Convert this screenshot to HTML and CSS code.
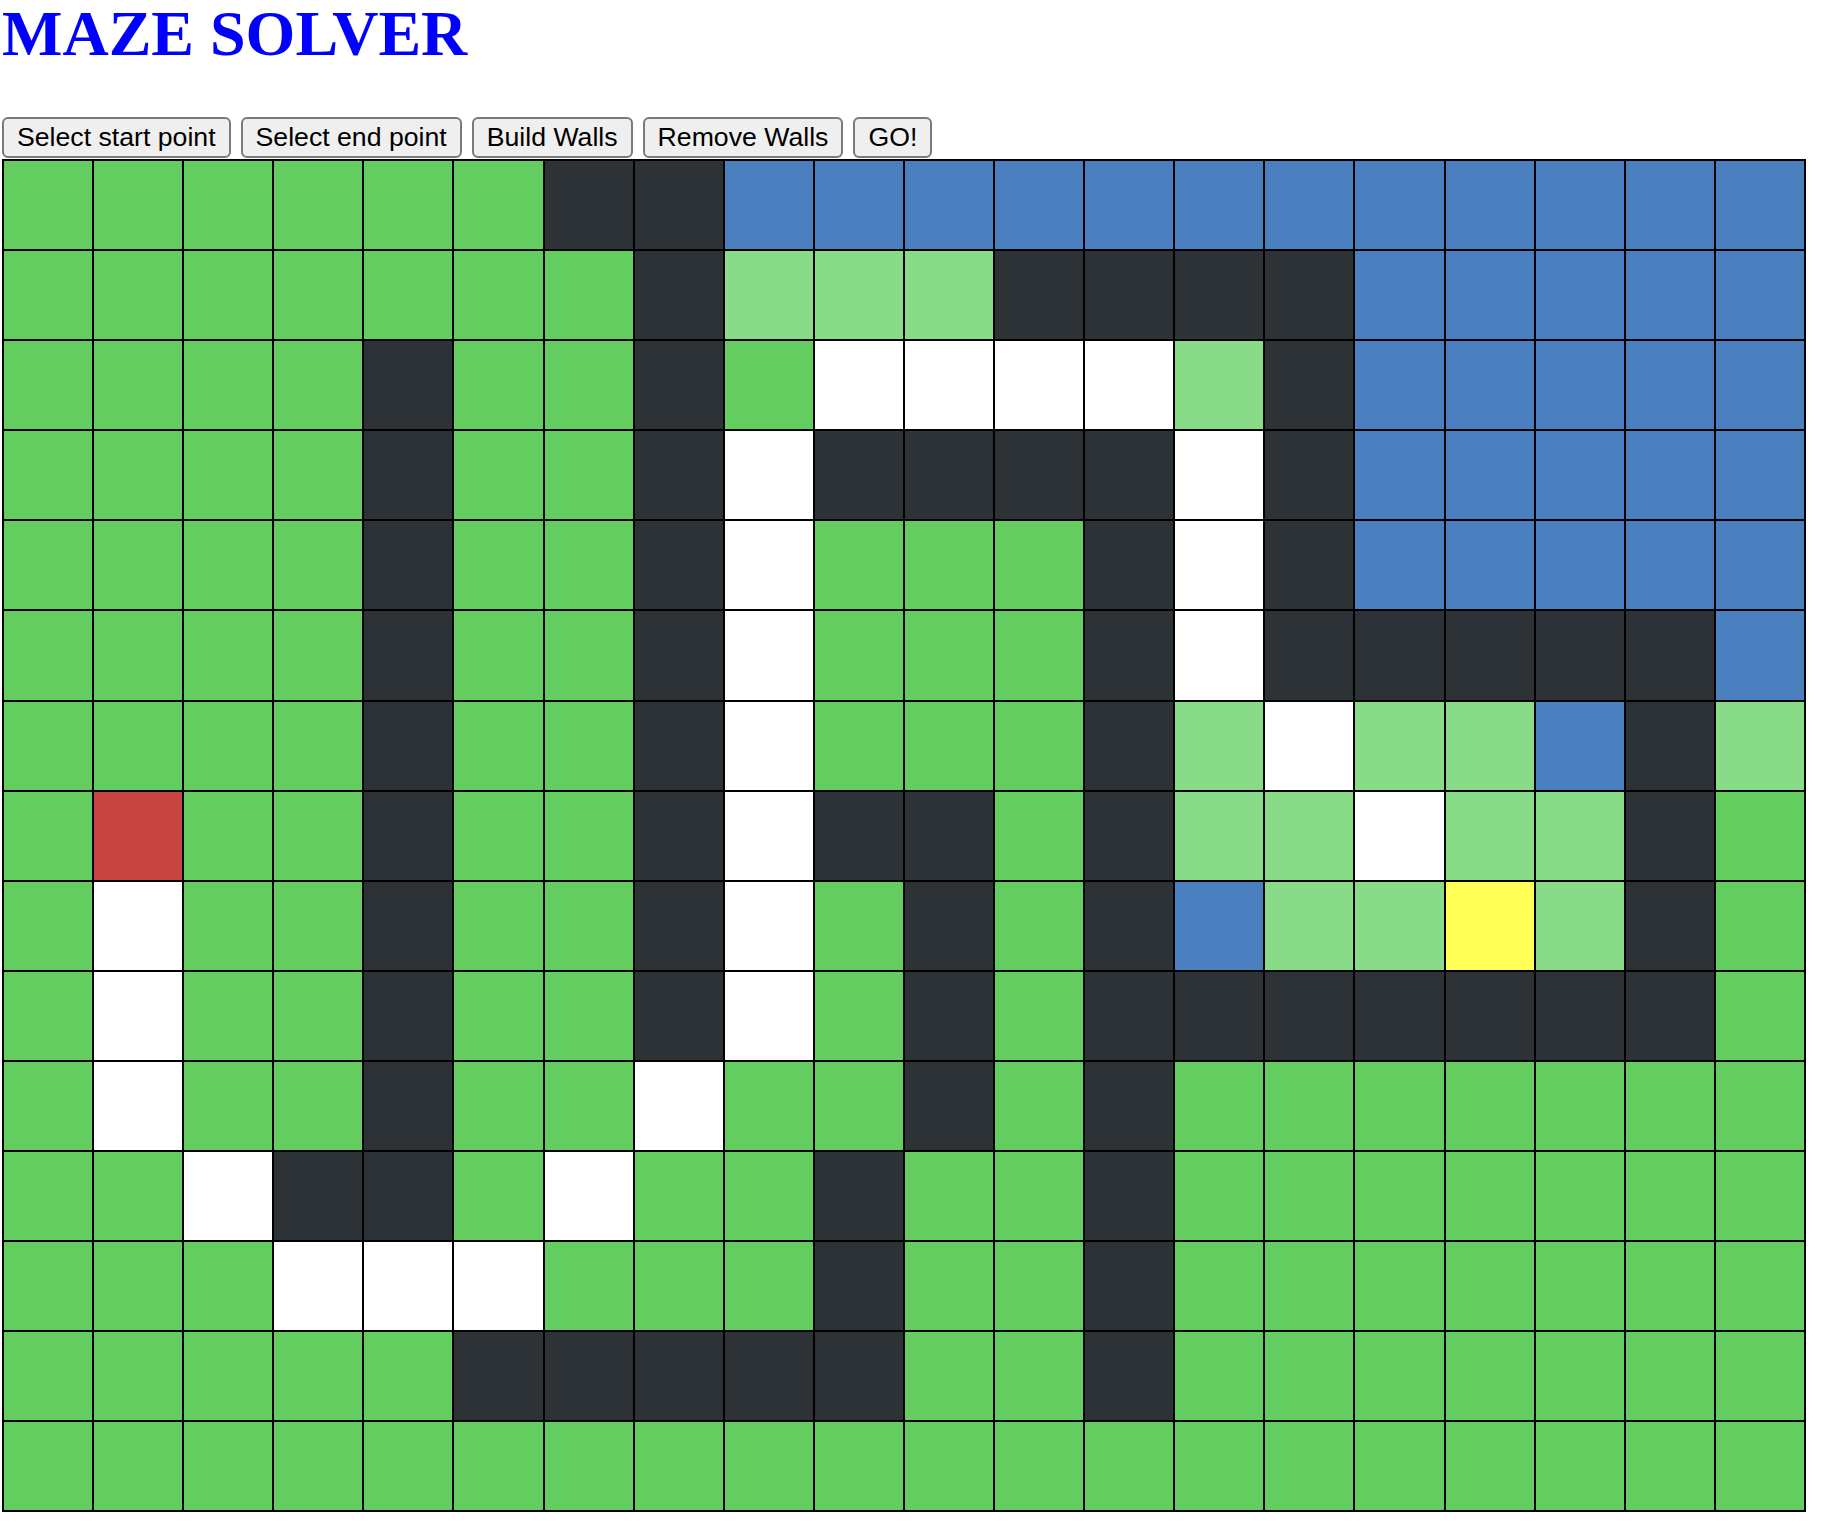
FILE: index.html
```html
<!DOCTYPE html>
<html>
<head>
<meta charset="utf-8">
<title>Maze Solver</title>
<link rel="stylesheet" href="styles.css">
</head>
<body>
<h1 class="title">MAZE SOLVER</h1>
<div class="controls">
  <button class="btn">Select start point</button>
  <button class="btn">Select end point</button>
  <button class="btn">Build Walls</button>
  <button class="btn">Remove Walls</button>
  <button class="btn">GO!</button>
</div>
<div class="maze">
  <div class="c g"></div><div class="c g"></div><div class="c g"></div><div class="c g"></div><div class="c g"></div><div class="c g"></div><div class="c d"></div><div class="c d"></div><div class="c b"></div><div class="c b"></div><div class="c b"></div><div class="c b"></div><div class="c b"></div><div class="c b"></div><div class="c b"></div><div class="c b"></div><div class="c b"></div><div class="c b"></div><div class="c b"></div><div class="c b"></div>
  <div class="c g"></div><div class="c g"></div><div class="c g"></div><div class="c g"></div><div class="c g"></div><div class="c g"></div><div class="c g"></div><div class="c d"></div><div class="c l"></div><div class="c l"></div><div class="c l"></div><div class="c d"></div><div class="c d"></div><div class="c d"></div><div class="c d"></div><div class="c b"></div><div class="c b"></div><div class="c b"></div><div class="c b"></div><div class="c b"></div>
  <div class="c g"></div><div class="c g"></div><div class="c g"></div><div class="c g"></div><div class="c d"></div><div class="c g"></div><div class="c g"></div><div class="c d"></div><div class="c g"></div><div class="c w"></div><div class="c w"></div><div class="c w"></div><div class="c w"></div><div class="c l"></div><div class="c d"></div><div class="c b"></div><div class="c b"></div><div class="c b"></div><div class="c b"></div><div class="c b"></div>
  <div class="c g"></div><div class="c g"></div><div class="c g"></div><div class="c g"></div><div class="c d"></div><div class="c g"></div><div class="c g"></div><div class="c d"></div><div class="c w"></div><div class="c d"></div><div class="c d"></div><div class="c d"></div><div class="c d"></div><div class="c w"></div><div class="c d"></div><div class="c b"></div><div class="c b"></div><div class="c b"></div><div class="c b"></div><div class="c b"></div>
  <div class="c g"></div><div class="c g"></div><div class="c g"></div><div class="c g"></div><div class="c d"></div><div class="c g"></div><div class="c g"></div><div class="c d"></div><div class="c w"></div><div class="c g"></div><div class="c g"></div><div class="c g"></div><div class="c d"></div><div class="c w"></div><div class="c d"></div><div class="c b"></div><div class="c b"></div><div class="c b"></div><div class="c b"></div><div class="c b"></div>
  <div class="c g"></div><div class="c g"></div><div class="c g"></div><div class="c g"></div><div class="c d"></div><div class="c g"></div><div class="c g"></div><div class="c d"></div><div class="c w"></div><div class="c g"></div><div class="c g"></div><div class="c g"></div><div class="c d"></div><div class="c w"></div><div class="c d"></div><div class="c d"></div><div class="c d"></div><div class="c d"></div><div class="c d"></div><div class="c b"></div>
  <div class="c g"></div><div class="c g"></div><div class="c g"></div><div class="c g"></div><div class="c d"></div><div class="c g"></div><div class="c g"></div><div class="c d"></div><div class="c w"></div><div class="c g"></div><div class="c g"></div><div class="c g"></div><div class="c d"></div><div class="c l"></div><div class="c w"></div><div class="c l"></div><div class="c l"></div><div class="c b"></div><div class="c d"></div><div class="c l"></div>
  <div class="c g"></div><div class="c r"></div><div class="c g"></div><div class="c g"></div><div class="c d"></div><div class="c g"></div><div class="c g"></div><div class="c d"></div><div class="c w"></div><div class="c d"></div><div class="c d"></div><div class="c g"></div><div class="c d"></div><div class="c l"></div><div class="c l"></div><div class="c w"></div><div class="c l"></div><div class="c l"></div><div class="c d"></div><div class="c g"></div>
  <div class="c g"></div><div class="c w"></div><div class="c g"></div><div class="c g"></div><div class="c d"></div><div class="c g"></div><div class="c g"></div><div class="c d"></div><div class="c w"></div><div class="c g"></div><div class="c d"></div><div class="c g"></div><div class="c d"></div><div class="c b"></div><div class="c l"></div><div class="c l"></div><div class="c y"></div><div class="c l"></div><div class="c d"></div><div class="c g"></div>
  <div class="c g"></div><div class="c w"></div><div class="c g"></div><div class="c g"></div><div class="c d"></div><div class="c g"></div><div class="c g"></div><div class="c d"></div><div class="c w"></div><div class="c g"></div><div class="c d"></div><div class="c g"></div><div class="c d"></div><div class="c d"></div><div class="c d"></div><div class="c d"></div><div class="c d"></div><div class="c d"></div><div class="c d"></div><div class="c g"></div>
  <div class="c g"></div><div class="c w"></div><div class="c g"></div><div class="c g"></div><div class="c d"></div><div class="c g"></div><div class="c g"></div><div class="c w"></div><div class="c g"></div><div class="c g"></div><div class="c d"></div><div class="c g"></div><div class="c d"></div><div class="c g"></div><div class="c g"></div><div class="c g"></div><div class="c g"></div><div class="c g"></div><div class="c g"></div><div class="c g"></div>
  <div class="c g"></div><div class="c g"></div><div class="c w"></div><div class="c d"></div><div class="c d"></div><div class="c g"></div><div class="c w"></div><div class="c g"></div><div class="c g"></div><div class="c d"></div><div class="c g"></div><div class="c g"></div><div class="c d"></div><div class="c g"></div><div class="c g"></div><div class="c g"></div><div class="c g"></div><div class="c g"></div><div class="c g"></div><div class="c g"></div>
  <div class="c g"></div><div class="c g"></div><div class="c g"></div><div class="c w"></div><div class="c w"></div><div class="c w"></div><div class="c g"></div><div class="c g"></div><div class="c g"></div><div class="c d"></div><div class="c g"></div><div class="c g"></div><div class="c d"></div><div class="c g"></div><div class="c g"></div><div class="c g"></div><div class="c g"></div><div class="c g"></div><div class="c g"></div><div class="c g"></div>
  <div class="c g"></div><div class="c g"></div><div class="c g"></div><div class="c g"></div><div class="c g"></div><div class="c d"></div><div class="c d"></div><div class="c d"></div><div class="c d"></div><div class="c d"></div><div class="c g"></div><div class="c g"></div><div class="c d"></div><div class="c g"></div><div class="c g"></div><div class="c g"></div><div class="c g"></div><div class="c g"></div><div class="c g"></div><div class="c g"></div>
  <div class="c g"></div><div class="c g"></div><div class="c g"></div><div class="c g"></div><div class="c g"></div><div class="c g"></div><div class="c g"></div><div class="c g"></div><div class="c g"></div><div class="c g"></div><div class="c g"></div><div class="c g"></div><div class="c g"></div><div class="c g"></div><div class="c g"></div><div class="c g"></div><div class="c g"></div><div class="c g"></div><div class="c g"></div><div class="c g"></div>
</div>
</body>
</html>
```
FILE: styles.css
```css
html, body {
  margin: 0;
  padding: 0;
  background: #fff;
}
body {
  padding: 0 2px;
  font-family: "Liberation Serif", "Times New Roman", serif;
}
.title {
  margin: 0 0 49px 0;
  font-family: "Liberation Serif", "Times New Roman", serif;
  font-size: 64px;
  font-weight: bold;
  color: #0000ff;
  line-height: 68px;
}
.controls {
  display: flex;
  gap: 10px;
  align-items: flex-start;
}
.btn {
  height: 41px;
  margin: 0;
  padding: 0 13px;
  font-family: "Liberation Sans", Arial, sans-serif;
  font-size: 26.67px;
  color: #000;
  background: #efefef;
  border: 2px solid #7a7a7a;
  border-radius: 6px;
  line-height: 1;
}
.maze {
  margin-top: 1px;
  display: grid;
  grid-template-columns: repeat(20, 88.1px);
  grid-template-rows: repeat(15, 88.1px);
  gap: 2px;
  padding: 2px;
  background: #000;
  width: max-content;
}
.c { background: #63cd5f; }
.g { background: #63cd5f; }
.l { background: #88dc87; }
.d { background: #2d3237; }
.b { background: #4a80c0; }
.w { background: #ffffff; }
.r { background: #c74540; }
.y { background: #ffff55; }
```
